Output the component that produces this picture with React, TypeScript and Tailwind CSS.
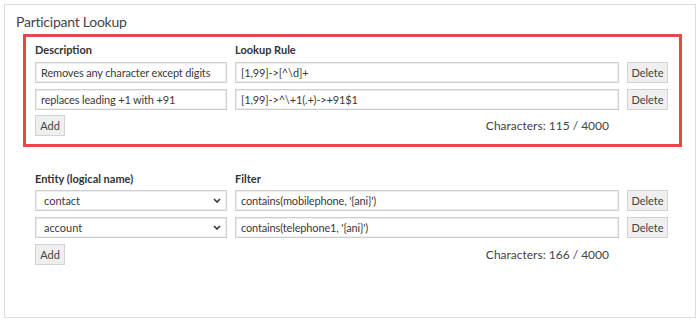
import { Fragment, ReactNode } from "react";

const rules = [
  { description: "Removes any character except digits", rule: "[1,99]->[^\\d]+" },
  { description: "replaces leading +1 with +91", rule: "[1,99]->^\\+1(.+)->+91$1" },
];

const filters = [
  { entity: "contact", filter: "contains(mobilephone, '{ani}')" },
  { entity: "account", filter: "contains(telephone1, '{ani}')" },
];

const inputCls =
  "block h-[21px] w-full border border-[#cfcfcf] shadow-[inset_0_0_0_1px_#ededed] bg-white px-[5px] text-[11px] tracking-[-0.15px] text-[#3a3a3a] outline-none";
const btnCls =
  "block h-[21px] border border-[#d2d2d2] bg-[#efefef] text-[11px] text-[#444] leading-none";

function Label({ children }: { children: ReactNode }) {
  return <div className="text-[11px] leading-[16px] font-bold text-[#333]">{children}</div>;
}

function Select({ value }: { value: string }) {
  return (
    <div className="relative h-[21px]">
      <select
        value={value}
        onChange={() => {}}
        className="block h-[21px] w-full appearance-none border border-[#cfcfcf] shadow-[inset_0_0_0_1px_#ededed] bg-white py-0 pl-[8px] text-[11px] leading-[19px] text-[#3a3a3a] outline-none"
      >
        <option value="contact">contact</option>
        <option value="account">account</option>
      </select>
      <svg className="pointer-events-none absolute right-[6px] top-[8px]" width="8" height="5" viewBox="0 0 8 5">
        <path d="M1 1l3 3 3-3" fill="none" stroke="#333" strokeWidth="1.6" />
      </svg>
    </div>
  );
}

export default function App() {
  return (
    <div className="min-h-[320px] bg-white p-[4px] font-['Lato','Segoe_UI',sans-serif]">
      <div className="h-[314px] border border-[#dcdcdc] px-[11px] pt-[7px]">
        <h2 className="mb-[2px] text-[14px] leading-[20px] tracking-[-0.25px] text-[#444]">Participant Lookup</h2>

        {/* Lookup rules */}
        <div className="ml-[7px] w-[659px] border-[3px] border-[#e5474b] pl-[9px] pt-[5px] pb-[8px]">
          <div className="grid grid-cols-[192px_384px_41px] gap-x-[8px]">
            <div className="mb-[4px]"><Label>Description</Label></div>
            <div className="col-span-2 mb-[4px]"><Label>Lookup Rule</Label></div>
            {rules.map((r) => (
              <Fragment key={r.description}>
                <div className="mb-[6px]"><input className={inputCls} value={r.description} readOnly /></div>
                <div className="mb-[6px]"><input className={inputCls} value={r.rule} readOnly /></div>
                <div className="mb-[6px]"><button className={`${btnCls} w-[41px]`}>Delete</button></div>
              </Fragment>
            ))}
            <div className="-mt-[1px]">
              <button className={`${btnCls} w-[30px]`}>Add</button>
            </div>
            <div className="flex items-center justify-end pr-[10px] text-[12px] text-[#444]">
              Characters: 115 / 4000
            </div>
          </div>
        </div>

        {/* Entity filters */}
        <div className="ml-[19px] mt-[24px] w-[633px]">
          <div className="grid grid-cols-[192px_384px_41px] gap-x-[8px]">
            <div className="mb-[3px]"><Label>Entity (logical name)</Label></div>
            <div className="col-span-2 mb-[3px]"><Label>Filter</Label></div>
            {filters.map((f) => (
              <Fragment key={f.entity}>
                <div className="mb-[6px]"><Select value={f.entity} /></div>
                <div className="mb-[6px]"><input className={inputCls} value={f.filter} readOnly /></div>
                <div className="mb-[6px]"><button className={`${btnCls} w-[41px]`}>Delete</button></div>
              </Fragment>
            ))}
            <div>
              <button className={`${btnCls} w-[30px]`}>Add</button>
            </div>
            <div className="flex items-center justify-end pr-[10px] text-[12px] text-[#444]">
              Characters: 166 / 4000
            </div>
          </div>
        </div>
      </div>
    </div>
  );
}
